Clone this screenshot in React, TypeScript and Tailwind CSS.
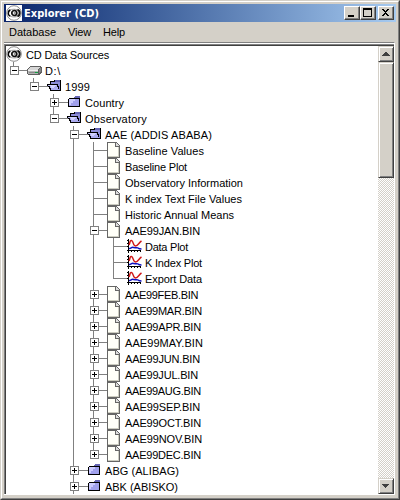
import { useLayoutEffect, useRef } from "react";

type Kind = "drive" | "open" | "closed" | "file" | "plot";
type Mark = "+" | "-" | "";
type Node = { text: string; end: number; depth: number; kind: Kind; mark: Mark; last?: boolean };

const files: [string, number][] = [
  ["FEB", 197], ["MAR", 201], ["APR", 200], ["MAY", 202], ["JUN", 199], ["JUL", 197],
  ["AUG", 200], ["SEP", 199], ["OCT", 200], ["NOV", 201], ["DEC", 200],
];

const nodes: Node[] = [
  { text: "D:\\", end: 60, depth: 0, kind: "drive", mark: "-", last: true },
  { text: "1999", end: 89, depth: 1, kind: "open", mark: "-", last: true },
  { text: "Country", end: 123, depth: 2, kind: "closed", mark: "+" },
  { text: "Observatory", end: 146, depth: 2, kind: "open", mark: "-", last: true },
  { text: "AAE (ADDIS ABABA)", end: 211, depth: 3, kind: "open", mark: "-" },
  { text: "Baseline Values", end: 203, depth: 4, kind: "file", mark: "" },
  { text: "Baseline Plot", end: 186, depth: 4, kind: "file", mark: "" },
  { text: "Observatory Information", end: 242, depth: 4, kind: "file", mark: "" },
  { text: "K index Text File Values", end: 241, depth: 4, kind: "file", mark: "" },
  { text: "Historic Annual Means", end: 233, depth: 4, kind: "file", mark: "" },
  { text: "AAE99JAN.BIN", end: 199, depth: 4, kind: "file", mark: "-" },
  { text: "Data Plot", end: 187, depth: 5, kind: "plot", mark: "" },
  { text: "K Index Plot", end: 201, depth: 5, kind: "plot", mark: "" },
  { text: "Export Data", end: 201, depth: 5, kind: "plot", mark: "", last: true },
  ...files.map(([m, end]): Node => ({
    text: `AAE99${m}.BIN`, end, depth: 4, kind: "file", mark: "+", last: m === "DEC",
  })),
  { text: "ABG (ALIBAG)", end: 178, depth: 3, kind: "closed", mark: "+" },
  { text: "ABK (ABISKO)", end: 177, depth: 3, kind: "closed", mark: "+" },
];

function Label({ text, width, className = "" }: { text: string; width: number; className?: string }) {
  const ref = useRef<HTMLSpanElement>(null);
  useLayoutEffect(() => {
    const el = ref.current;
    if (!el) return;
    el.style.letterSpacing = "0px";
    const natural = el.getBoundingClientRect().width;
    el.style.letterSpacing = `${(width - natural) / text.length}px`;
  }, [text, width]);
  return <span ref={ref} className={`shrink-0 whitespace-pre ${className}`}>{text}</span>;
}

function Logo() {
  return (
    <svg width="16" height="16" viewBox="0 0 16 16" className="block shrink-0">
      <rect width="16" height="16" fill="#fff" />
      <circle cx="8" cy="8" r="7.3" fill="#fff" stroke="#8a8a8a" />
      <path d="M1 6.500C3.500 3.700 12 3.200 15 6.800M1.500 10C5 12.500 11 12.700 14.500 10" fill="none" stroke="#999" strokeWidth="0.9" />
      <path d="M4.300 5C1.600 6.500 1.600 9.800 4.300 11.200" fill="none" stroke="#000" strokeWidth="1.500" />
      <path d="M11.500 4.700C14.500 6 14.500 9.800 11.500 11.300" fill="none" stroke="#111" strokeWidth="2" />
      <circle cx="8.300" cy="8" r="2.500" fill="#e8e8e8" stroke="#111" strokeWidth="1.700" />
      <rect x="8" y="7" width="2" height="2" fill="#999" />
    </svg>
  );
}

function Icon({ kind }: { kind: Kind }) {
  const cls = "block shrink-0";
  if (kind === "drive")
    return (
      <svg width="17" height="16" viewBox="0 0 17 16" className={cls} shapeRendering="crispEdges">
        <path d="M4 4H15V5H16V11H15V12H14V13H2V12H1V7H2V6H3V5H4Z" fill="#606060" />
        <path d="M4 5H14V6H13V7H12V8H2V7H3V6H4Z" fill="#d6d6d6" />
        <path d="M2 8H12V12H2Z" fill="#b4b4b4" />
        <path d="M2 8H12V9H2Z" fill="#f0f0f0" />
        <path d="M13 7H14V6H15V10H14V11H13Z" fill="#858585" />
        <path d="M3 10H9V11H3Z" fill="#888" />
        <path d="M9 10H12V11H9Z" fill="#10a040" />
      </svg>
    );
  if (kind === "open")
    return (
      <svg width="17" height="16" viewBox="0 0 17 16" className={cls} shapeRendering="crispEdges">
        <path d="M4 3H8V2H15V13H4V11H3V9H2V8H1V6H4Z" fill="#000" />
        <path d="M5 4H9V3H14V12H13V8H12V6H5Z" fill="#8c8cd8" />
        <path d="M9 2H14V4H9Z" fill="#6666b4" />
        <path d="M2 7H11V9H12V11H13V12H5V10H4V8H2Z" fill="#acacf0" />
        <path d="M3 7H10V8H9V9H8V10H5V8H3Z" fill="#d2d2ff" />
      </svg>
    );
  if (kind === "closed")
    return (
      <svg width="17" height="16" viewBox="0 0 17 16" className={cls} shapeRendering="crispEdges">
        <path d="M3 4H8V3H9V2H14V13H2V5H3Z" fill="#000" />
        <path d="M9 2H14V4H8V3H9Z" fill="#6666b4" />
        <path d="M3 5H13V12H3Z" fill="#a0a0ec" />
        <path d="M3 5H9V7H7V9H5V11H3Z" fill="#ccccff" />
      </svg>
    );
  if (kind === "file")
    return (
      <svg width="17" height="16" viewBox="0 0 17 16" className={cls} shapeRendering="crispEdges">
        <path d="M1 0H11V1H12V2H13V3H14V16H1Z" fill="#666" />
        <path d="M2 1H9V5H13V15H2Z" fill="#fffff8" />
        <path d="M10 1H11V2H12V3H13V4H10Z" fill="#ddd" />
        <path d="M12 5H13V15H12ZM2 14H13V15H2Z" fill="#ccccc0" />
      </svg>
    );
  return (
    <svg width="17" height="16" viewBox="0 0 17 16" className={cls}>
      <path d="M2.5 1V14.5M1 12.5H15M0.5 2.5H2M0.5 5.5H2M0.5 8.5H2M5.5 12V14M8.5 12V14M11.5 12V14M14.5 12V14" stroke="#000" fill="none" shapeRendering="crispEdges" />
      <path d="M3 7C4 5 4 2 5.5 2.5C7.5 3 7 8 9.5 8C12 8 13 4.5 15.5 3" stroke="#d01818" strokeWidth="1.5" fill="none" />
      <path d="M3 10.5C5 11 5.500 8.500 7.500 9.500C9 10.500 11 9 12 10C13 11 14 11 15.500 11" stroke="#1010c0" strokeWidth="1.5" fill="none" />
    </svg>
  );
}

function Guide({ node, own, carry }: { node: Node; own: boolean; carry: boolean }) {
  if (!own)
    return (
      <div className="flex h-4 w-5 shrink-0 pl-[9px]">
        {carry && <div className="h-4 w-px bg-[#808080]" />}
      </div>
    );
  return (
    <div className="grid h-4 w-[22px] shrink-0 grid-cols-[9px_1fr] *:col-start-1 *:row-start-1">
      <div className={`col-span-2 ml-[9px] w-px bg-[#808080] ${node.last ? "h-[9px]" : "h-4"}`} />
      <div className="col-span-2 mt-2 ml-[9px] h-px w-[15px] bg-[#808080]" />
      {node.mark && (
        <div className="z-10 col-span-2 mt-1 ml-1.5 grid size-[9px] place-items-center border border-[#808080] bg-white *:col-start-1 *:row-start-1">
          <div className="h-px w-[5px] bg-black" />
          {node.mark === "+" && <div className="h-[5px] w-px bg-black" />}
        </div>
      )}
    </div>
  );
}

function Row({ node }: { node: Node }) {
  return (
    <div className="-ml-0.5 flex h-4 shrink-0">
      {Array.from({ length: node.depth + 1 }, (_, d) => (
        <Guide key={d} node={node} own={d === node.depth} carry={d === 3 || (d === 4 && node.depth === 5)} />
      ))}
      <div className="-mr-px flex w-5 shrink-0"><Icon kind={node.kind} /></div>
      <Label text={node.text} width={node.end - 45 - node.depth * 20 + 1} className="leading-[18px]" />
    </div>
  );
}

const raised = "border border-t-[#d4d0c8] border-l-[#d4d0c8] border-r-[#404040] border-b-[#404040] bg-[#d4d0c8] shadow-[inset_1px_1px_0_#fff,inset_-1px_-1px_0_#808080]";
const caption = "h-3.5 w-4 shrink-0 border border-t-white border-l-white border-r-[#404040] border-b-[#404040] bg-[#d4d0c8] shadow-[inset_-1px_-1px_0_#808080]";

export default function App() {
  return (
    <div className="flex h-[500px] w-[400px] flex-col overflow-hidden border border-t-[#d4d0c8] border-l-[#d4d0c8] border-r-[#404040] border-b-[#404040] bg-[#d4d0c8] font-['Liberation_Sans',Arial,sans-serif] text-[11px] text-black">
      <div className="flex h-[498px] flex-col border border-t-white border-l-white border-r-[#808080] border-b-[#808080] p-0.5">
        <header className="flex h-[18px] shrink-0 items-center bg-linear-to-r from-[#0a246a] to-[#a6caf0] pr-0.5 pl-0.5">
          <Logo />
          <Label text="Explorer (CD)" width={75} className="mt-0.5 ml-0.5 font-['DejaVu_Sans_Condensed','DejaVu_Sans',sans-serif] text-[11px] font-bold text-white" />
          <div className="ml-auto flex">
            <div className={caption}><svg width="14" height="12" shapeRendering="crispEdges"><path d="M3 8H9V10H3Z" /></svg></div>
            <div className={caption}><svg width="14" height="12" shapeRendering="crispEdges"><path fillRule="evenodd" d="M2 1H11V10H2ZM3 3V9H10V3Z" /></svg></div>
            <div className={`ml-0.5 ${caption}`}><svg width="14" height="12" shapeRendering="crispEdges"><path d="M3 2H5V3H6V4H7V3H8V2H10V3H9V4H8V5H7V6H8V7H9V8H10V9H8V8H7V7H6V8H5V9H3V8H4V7H5V6H6V5H5V4H4V3H3Z" /></svg></div>
          </div>
        </header>
        <nav className="flex h-5 shrink-0 pl-[5px] leading-[20px]">
          <div className="w-[59px]"><Label text="Database" width={47} /></div>
          <div className="w-[35px]"><Label text="View" width={23} /></div>
          <Label text="Help" width={22} />
        </nav>
        <main className="mr-px flex h-[453px] shrink-0 flex-col border-t border-r border-b border-[#808080] border-r-white border-b-white">
          <div className="h-px shrink-0 bg-white" />
          <div className="flex h-[450px] border-t border-l border-t-[#808080] border-l-[#808080]">
            <div className="flex min-w-0 flex-1 border-t border-l border-[#404040] bg-white">
              <div className="flex h-[448px] min-w-0 flex-1 flex-col overflow-hidden">
                <div className="flex h-4 shrink-0">
                  <Logo />
                  <Label text="CD Data Sources" width={83} className="ml-1 leading-[18px]" />
                </div>
                {nodes.map((n) => <Row key={n.text} node={n} />)}
              </div>
              <div className="flex w-4 shrink-0 flex-col bg-[repeating-conic-gradient(#d4d0c8_0_25%,#fff_0_50%)] bg-size-[2px_2px]">
                <div className={`h-4 shrink-0 ${raised}`}><svg width="14" height="14" shapeRendering="crispEdges"><path d="M6 5H8V6H9V7H10V8H11V9H3V8H4V7H5V6H6Z" fill="#404040" /></svg></div>
                <div className={`h-[116px] shrink-0 ${raised}`} />
                <div className={`mt-auto h-4 shrink-0 ${raised}`}><svg width="14" height="14" shapeRendering="crispEdges"><path d="M3 5H10V6H9V7H8V8H7V9H6V8H5V7H4V6H3Z" fill="#404040" /></svg></div>
              </div>
            </div>
          </div>
        </main>
      </div>
    </div>
  );
}
